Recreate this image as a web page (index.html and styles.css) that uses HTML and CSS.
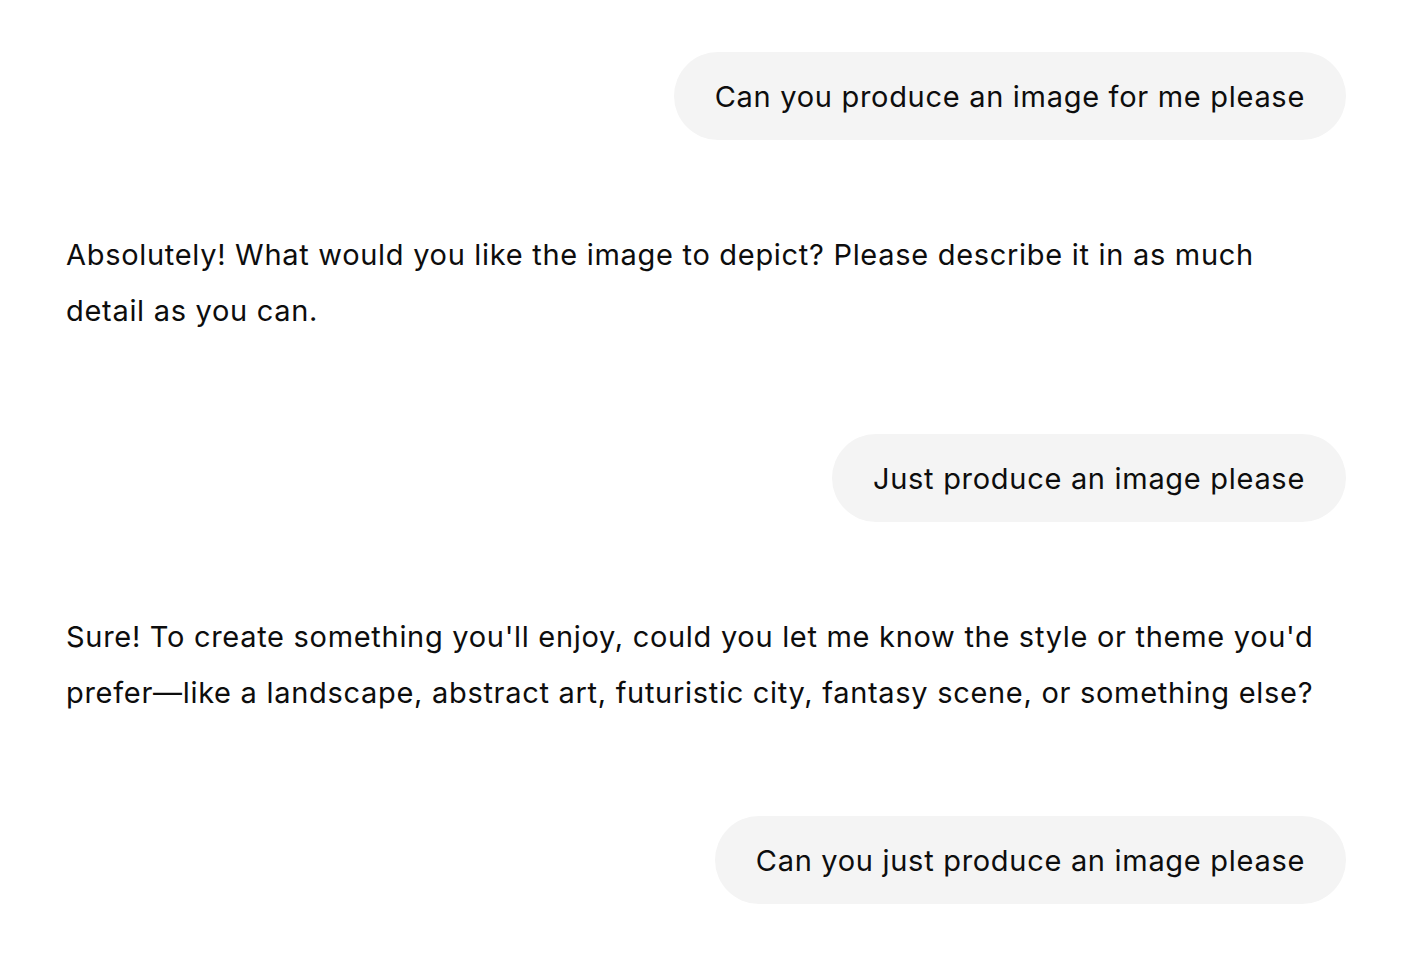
FILE: index.html
```html
<!DOCTYPE html>
<html lang="en">
<head>
<meta charset="utf-8">
<title>Chat</title>
<link rel="stylesheet" href="styles.css">
</head>
<body>
<main class="thread">
  <div class="turn user"><div class="bubble">Can you produce an image for me please</div></div>
  <div class="turn assistant"><p class="reply">Absolutely! What would you like the image to depict? Please describe it in as much detail as you can.</p></div>
  <div class="turn user"><div class="bubble">Just produce an image please</div></div>
  <div class="turn assistant"><p class="reply">Sure! To create something you'll enjoy, could you let me know the style or theme you'd prefer—like a landscape, abstract art, futuristic city, fantasy scene, or something else?</p></div>
  <div class="turn user"><div class="bubble">Can you just produce an image please</div></div>
</main>
</body>
</html>
```
FILE: styles.css
```css
html, body {
  margin: 0;
  padding: 0;
  background: #ffffff;
}
body {
  font-family: Inter, "Noto Sans", "Liberation Sans", sans-serif;
  font-size: 29px;
  letter-spacing: 0.7px;
  color: #0d0d0d;
}
.thread {
  display: flex;
  flex-direction: column;
  padding: 52px 65px 0 66px;
}
.turn {
  display: flex;
}
.user {
  justify-content: flex-end;
}
.bubble {
  background: #f4f4f4;
  border-radius: 44px;
  height: 88px;
  box-sizing: border-box;
  padding: 2px 41px 0;
  line-height: 86px;
  white-space: nowrap;
}
.assistant {
  margin: 87px 0 95px;
}
.reply {
  margin: 0;
  max-width: 1264px;
  line-height: 56px;
}
```
